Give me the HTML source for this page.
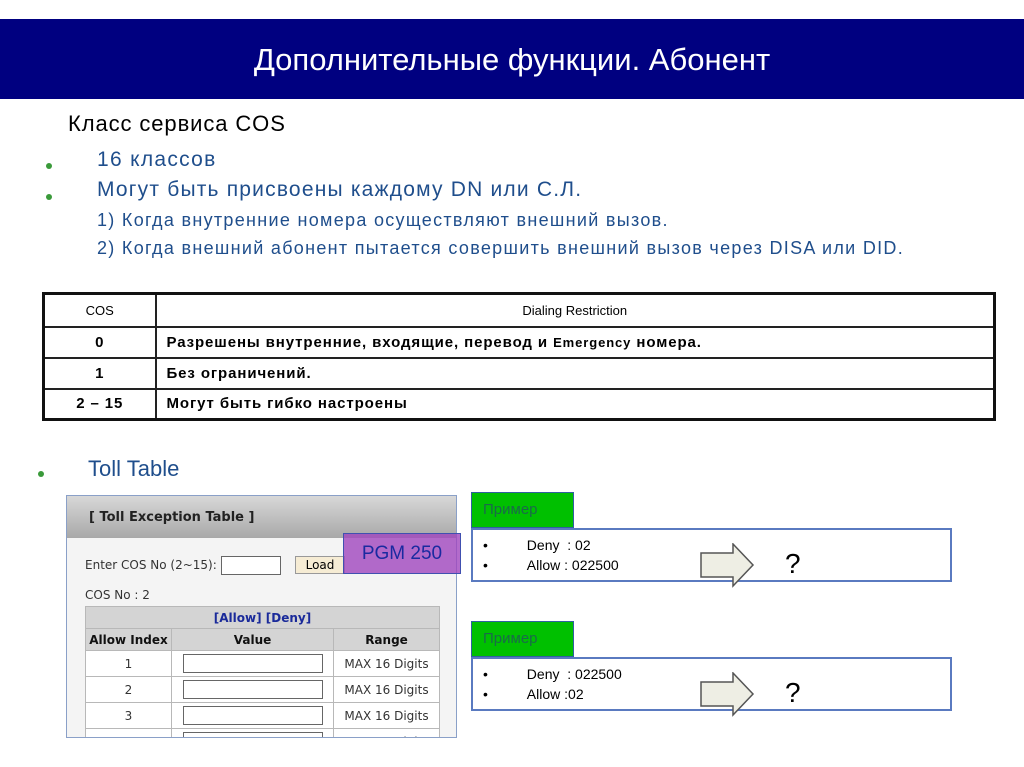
<!DOCTYPE html>
<html><head><meta charset="utf-8"><style>
*{margin:0;padding:0;box-sizing:border-box}
body{width:1024px;height:767px;background:#fff;position:relative;overflow:hidden;font-family:"Liberation Sans","DejaVu Sans",sans-serif}
.a{position:absolute}
.banner{left:0;top:19px;width:1024px;height:80px;background:#000080;color:#fff;font-size:31px;text-align:center;line-height:82px}
.blue{color:#1f4e8c}
.dot{width:6px;height:6px;border-radius:50%;background:#3a9a3a}
table{border-collapse:collapse}
.cos{left:42px;top:292px;width:954px;border:3px solid #111}
.cos td{border:2px solid #222;font-size:15px;height:31px}
.cos td b{letter-spacing:0.9px}
.cos td.c{text-align:center;width:112px}
.shot{left:66px;top:495px;width:391px;height:243px;border:1px solid #8aa0c8;background:#f4f4f4;overflow:hidden}
.inner td{border:1px solid #b8b8b8;font-family:"DejaVu Sans",sans-serif;font-size:12px;text-align:center;height:26px;background:#fff;color:#333}
.inner .h td{background:#d4d4d4;font-weight:bold;height:22px;color:#111}
.inp{display:inline-block;width:140px;height:19px;border:1px solid #666;background:#fff;vertical-align:middle}
.tab{background:#00c000;color:#1a6a4a;font-size:15px;padding-left:11px;line-height:34px;border:1px solid #3060a0;width:103px;height:36px}
.box{border:2px solid #5a7ac0;background:#fff;width:481px;height:54px;font-size:14px}
.box .l{position:absolute;left:10px;font-size:14px}
.q{font-size:28px}
</style></head><body>
<div class="a banner">Дополнительные функции. Абонент</div>
<div class="a" style="left:68px;top:111px;font-size:22px;letter-spacing:0.9px;color:#000">Класс сервиса COS</div>
<div class="a dot" style="left:46px;top:163px"></div>
<div class="a blue" style="left:97px;top:148px;font-size:21px;letter-spacing:1.3px">16 классов</div>
<div class="a dot" style="left:46px;top:194px"></div>
<div class="a blue" style="left:97px;top:178px;font-size:21px;letter-spacing:1.2px">Могут быть присвоены каждому DN или С.Л.</div>
<div class="a blue" style="left:97px;top:210px;font-size:18px;letter-spacing:1.3px">1) Когда внутренние номера осуществляют внешний вызов.</div>
<div class="a blue" style="left:97px;top:238px;font-size:18px;letter-spacing:1.3px">2) Когда внешний абонент пытается совершить внешний вызов через DISA или DID.</div>
<table class="a cos">
<tr><td class="c" style="height:33px;font-size:13px">COS</td><td style="text-align:center;font-size:13px">Dialing Restriction</td></tr>
<tr><td class="c"><b>0</b></td><td style="padding-left:10px"><b>Разрешены внутренние, входящие, перевод и <span style="font-size:13px">Emergency</span> номера.</b></td></tr>
<tr><td class="c"><b>1</b></td><td style="padding-left:10px"><b>Без ограничений.</b></td></tr>
<tr><td class="c"><b>2 – 15</b></td><td style="padding-left:10px"><b>Могут быть гибко настроены</b></td></tr>
</table>
<div class="a dot" style="left:38px;top:471px"></div>
<div class="a blue" style="left:88px;top:456px;font-size:22px">Toll Table</div>
<div class="a shot">
 <div class="a" style="left:0;top:0;width:391px;height:42px;background:linear-gradient(#d8d8d8,#a8a8a8);font-family:'DejaVu Sans',sans-serif;font-weight:bold;font-size:13px;color:#222;padding:14px 0 0 22px">[ Toll Exception Table ]</div>
 <div class="a" style="left:18px;top:60px;font-family:'DejaVu Sans',sans-serif;font-size:12px;color:#333">Enter COS No (2~15): <span class="inp" style="width:60px"></span></div>
 <div class="a" style="left:228px;top:60px;width:50px;height:18px;border:1px solid #999;background:#f6ecd4;font-family:'DejaVu Sans',sans-serif;font-size:12px;text-align:center;line-height:17px">Load</div>
 <div class="a" style="left:18px;top:92px;font-family:'DejaVu Sans',sans-serif;font-size:12px;color:#333">COS No : 2</div>
 <table class="a inner" style="left:18px;top:110px;width:355px">
  <tr class="h"><td colspan="3" style="color:#1a2a9a">[Allow] [Deny]</td></tr>
  <tr class="h"><td style="width:86px">Allow Index</td><td style="width:162px">Value</td><td>Range</td></tr>
  <tr><td>1</td><td><span class="inp"></span></td><td>MAX 16 Digits</td></tr>
  <tr><td>2</td><td><span class="inp"></span></td><td>MAX 16 Digits</td></tr>
  <tr><td>3</td><td><span class="inp"></span></td><td>MAX 16 Digits</td></tr>
  <tr><td>4</td><td><span class="inp"></span></td><td>MAX 16 Digits</td></tr>
 </table>
</div>
<div class="a" style="left:343px;top:533px;width:118px;height:41px;background:rgba(160,70,190,0.8);border:1px solid #4050b0;color:#1a2aa0;font-size:19px;text-align:center;line-height:40px">PGM 250</div>

<div class="a tab" style="left:471px;top:492px">Пример</div>
<div class="a box" style="left:471px;top:528px">
 <div class="l" style="top:7px">•&nbsp;&nbsp;&nbsp;&nbsp;&nbsp;&nbsp;&nbsp;&nbsp;&nbsp;&nbsp;Deny&nbsp; : 02</div>
 <div class="l" style="top:27px">•&nbsp;&nbsp;&nbsp;&nbsp;&nbsp;&nbsp;&nbsp;&nbsp;&nbsp;&nbsp;Allow : 022500</div>
 <svg class="a" style="left:227px;top:13px" width="56" height="45"><path d="M1 10H33V1L53 22L33 43V34H1Z" fill="#eeeee4" stroke="#555" stroke-width="1.5"/></svg>
 <div class="a q" style="left:312px;top:18px">?</div>
</div>
<div class="a tab" style="left:471px;top:621px">Пример</div>
<div class="a box" style="left:471px;top:657px">
 <div class="l" style="top:7px">•&nbsp;&nbsp;&nbsp;&nbsp;&nbsp;&nbsp;&nbsp;&nbsp;&nbsp;&nbsp;Deny&nbsp; : 022500</div>
 <div class="l" style="top:27px">•&nbsp;&nbsp;&nbsp;&nbsp;&nbsp;&nbsp;&nbsp;&nbsp;&nbsp;&nbsp;Allow :02</div>
 <svg class="a" style="left:227px;top:13px" width="56" height="45"><path d="M1 10H33V1L53 22L33 43V34H1Z" fill="#eeeee4" stroke="#555" stroke-width="1.5"/></svg>
 <div class="a q" style="left:312px;top:18px">?</div>
</div>
</body></html>
